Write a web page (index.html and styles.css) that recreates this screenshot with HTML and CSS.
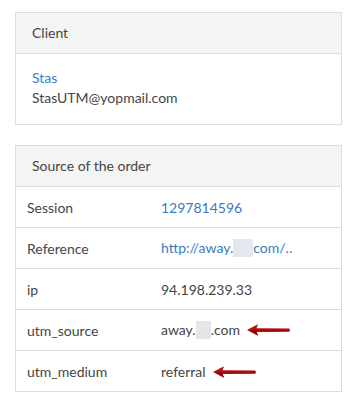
FILE: index.html
```html
<!DOCTYPE html>
<html lang="en">
<head>
    <meta charset="UTF-8">
    <meta name="viewport" content="width=device-width, initial-scale=1.0">
    <title>Order</title>
    <link rel="stylesheet" href="styles.css">
</head>
<body>
    <div class="panel">
        <div class="panel-heading">Client</div>
        <div class="panel-body">
            <a href="#" class="link">Stas</a><br>
            StasUTM@yopmail.com
        </div>
    </div>

    <div class="panel">
        <div class="panel-heading">Source of the order</div>
        <table class="info-table">
            <tr>
                <td class="label">Session</td>
                <td><a href="#" class="link">1297814596</a></td>
            </tr>
            <tr>
                <td class="label">Reference</td>
                <td><a href="#" class="link">http://away.<span class="blur blur-blue"></span>com/..</a></td>
            </tr>
            <tr>
                <td class="label">ip</td>
                <td>94.198.239.33</td>
            </tr>
            <tr>
                <td class="label">utm_source</td>
                <td>away.<span class="blur"></span>.com<svg class="arrow" width="44" height="12" viewBox="0 0 44 12"><path d="M0 6 L11 0.3 L9.5 4.3 L42 4.6 Q44 6 42 7.6 L9.5 7.8 L11 11.7 Z" fill="#b30d0d"/><path d="M3 6.4 L42 6.4 Q43.5 7 42 7.6 L9.5 7.8 L11 11.7 Z" fill="#8a0505"/></svg></td>
            </tr>
            <tr>
                <td class="label">utm_medium</td>
                <td>referral<svg class="arrow" width="44" height="12" viewBox="0 0 44 12"><path d="M0 6 L11 0.3 L9.5 4.3 L42 4.6 Q44 6 42 7.6 L9.5 7.8 L11 11.7 Z" fill="#b30d0d"/><path d="M3 6.4 L42 6.4 Q43.5 7 42 7.6 L9.5 7.8 L11 11.7 Z" fill="#8a0505"/></svg></td>
            </tr>
        </table>
    </div>
</body>
</html>
```

FILE: styles.css
```css
body {
    margin: 0;
    padding: 12px 14px 0 15px;
    font-family: Lato, "Liberation Sans", Arial, sans-serif;
    font-size: 14px;
    color: #454545;
    background: #fff;
}

.panel {
    border: 1px solid #ddd;
    margin-bottom: 20px;
}

.panel-heading {
    background: #f4f4f4;
    border-bottom: 1px solid #ddd;
    padding: 0 16px;
    height: 40px;
    line-height: 40px;
}

.panel-body {
    padding: 14px 16px 16px;
    line-height: 20px;
}

.link {
    color: #3a7bbf;
    text-decoration: none;
}

.info-table {
    width: 100%;
    border-collapse: collapse;
}

.info-table td {
    height: 40px;
    padding: 0 11px;
    border-top: 1px solid #ddd;
    vertical-align: middle;
    white-space: nowrap;
}

.info-table tr:first-child td {
    border-top: none;
}

.info-table .label {
    width: 112px;
}

.blur {
    display: inline-block;
    width: 15px;
    height: 18px;
    vertical-align: -4px;
    background: #e6e6e6;
}

.blur-blue {
    width: 20px;
    background: #e3e8ef;
}

.arrow {
    vertical-align: -1px;
    margin-left: 7px;
}
```
